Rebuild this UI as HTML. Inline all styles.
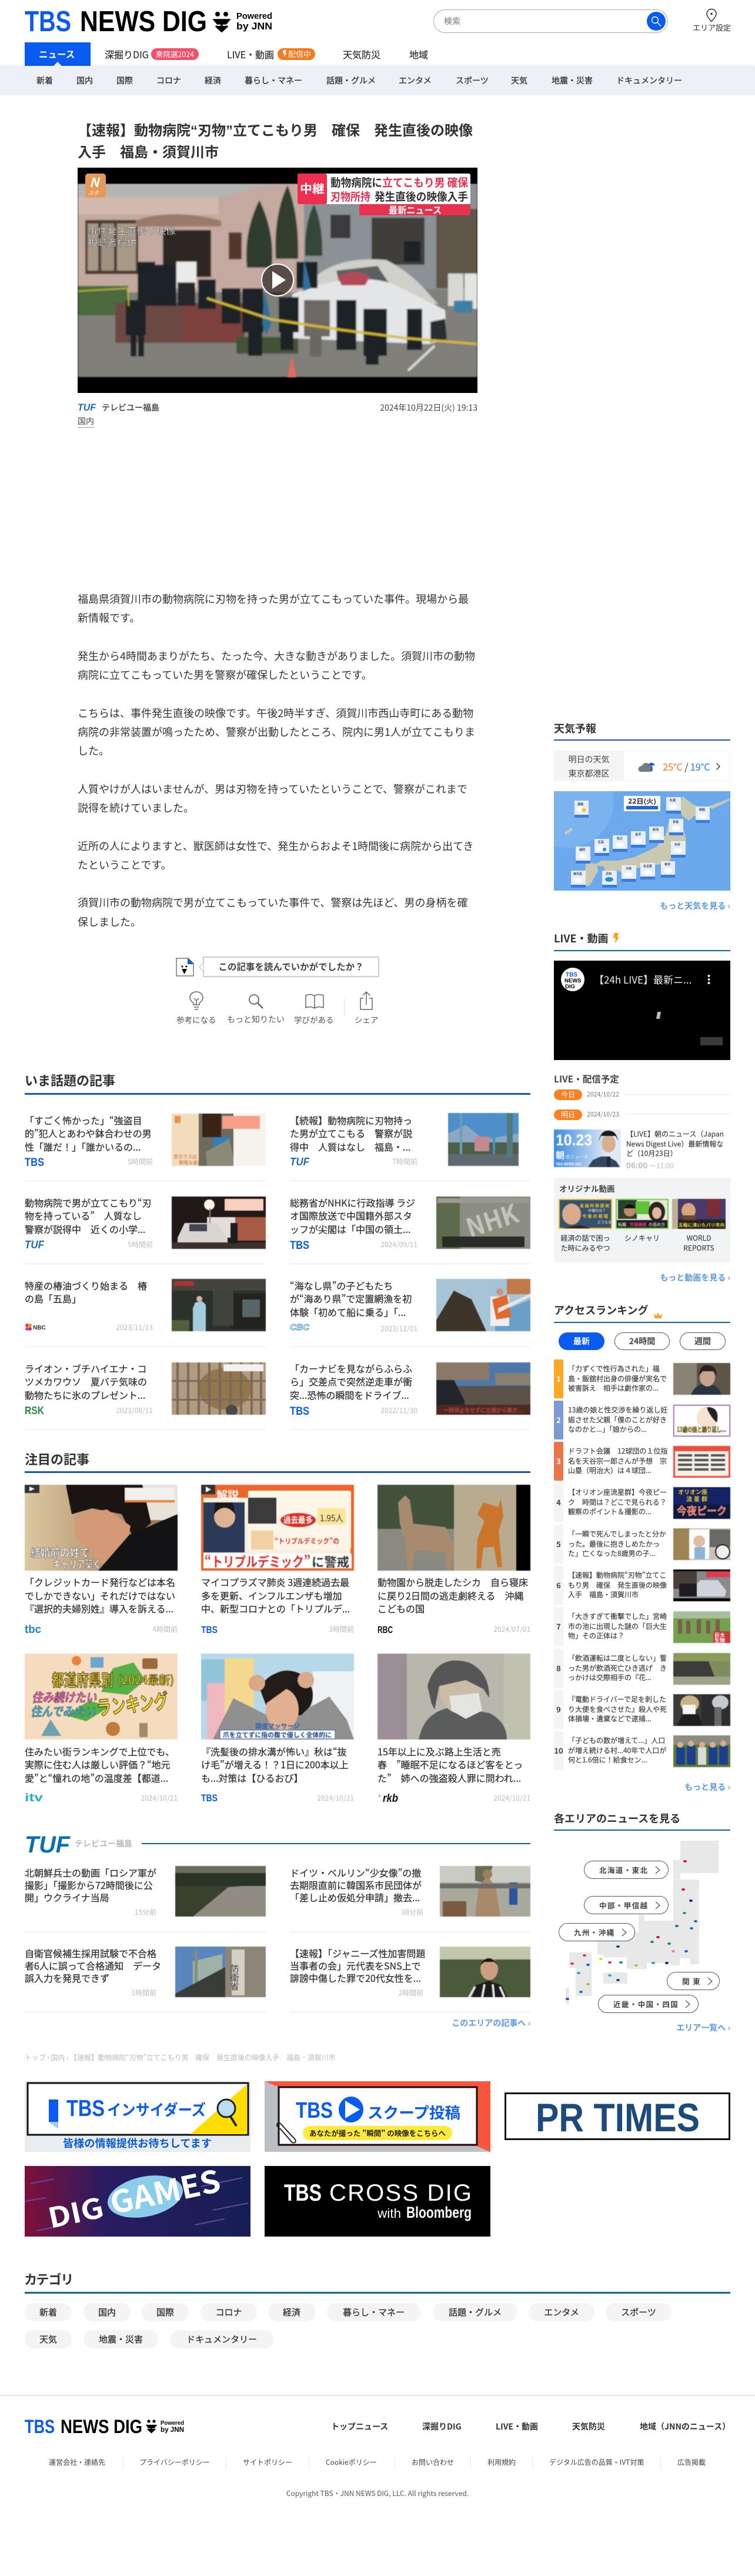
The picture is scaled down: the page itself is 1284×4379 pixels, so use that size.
<!DOCTYPE html>
<html lang="ja">
<head>
<meta charset="utf-8">
<title>TBS NEWS DIG</title>
<style>
html,body{margin:0;padding:0;background:#fff}
body{position:relative;width:1284px;height:4379px;overflow:hidden;font-family:"Noto Sans CJK JP","Liberation Sans",sans-serif;color:#333;font-size:14px}
.t{position:absolute;white-space:nowrap}
.a{position:absolute;display:block}
.b{font-weight:700}
.m{-webkit-text-stroke:.25px currentColor}
.q{font-family:"Liberation Sans",sans-serif}
.h{position:absolute;left:42px;font-size:22px;font-weight:700;line-height:30px;white-space:nowrap;color:#333}
.s{position:absolute;left:942px;font-size:18px;font-weight:700;line-height:26px;white-space:nowrap;color:#333}
.l{position:absolute;height:2px;background:#0b5bb5}
.sep{position:absolute;height:1px;background:#e6e6e6}
.ttl{position:absolute;font-size:16px;line-height:22.4px;white-space:nowrap;color:#333;-webkit-text-stroke:.25px #333}
.tm{position:absolute;font-size:12px;line-height:16px;color:#bbb;white-space:nowrap;text-align:right}
.more{position:absolute;font-size:14px;font-weight:700;color:#5e9ae2;white-space:nowrap;line-height:20px;text-align:right}
.rk{position:absolute;left:942px;width:16px;height:66px;border-radius:2px;background:#f4f4f4;color:#444;font-size:13px;font-weight:700;line-height:66px;text-align:center}
.rt{position:absolute;left:966px;font-size:12px;line-height:16.6px;white-space:nowrap;color:#444;-webkit-text-stroke:.2px #444}
.pill{position:absolute;background:#fff;border:1px solid #555;border-radius:16px;box-sizing:border-box;height:31px;line-height:29px;text-align:center;font-size:12.5px;font-weight:700;color:#444;letter-spacing:1.4px;white-space:nowrap}
.dot{position:absolute;width:6px;height:4px;border-radius:50%}
.chip{position:absolute;height:31px;line-height:31px;background:#f4f4f4;border-radius:16px;text-align:center;font-size:15px;color:#333;-webkit-text-stroke:.3px #333;white-space:nowrap}
.sn{position:absolute;top:127px;font-size:14px;line-height:20px;color:#333;-webkit-text-stroke:.3px #333;white-space:nowrap}
.f{position:absolute;top:4177px;font-size:12px;line-height:18px;color:#444;white-space:nowrap}
.fd{position:absolute;top:4175px;width:1px;height:22px;background:#e6e6e6}
.fn{position:absolute;top:4115px;font-size:14px;line-height:20px;font-weight:700;color:#333;white-space:nowrap}
svg text{font-family:"Noto Sans CJK JP","Liberation Sans",sans-serif}
svg text.lg{font-family:"Liberation Sans",sans-serif;font-weight:700}
svg text.th{font-family:"Liberation Sans",sans-serif;font-weight:400}
svg[width="160"],svg[width="260"],svg[width="154"],svg[width="97"],svg[width="120"],svg[width="91"],svg[width="90"],svg[width="114"]{filter:blur(.6px)}
</style>
</head>
<body>

<!-- HEADER -->
<svg class="a" style="left:42px;top:14px" width="430" height="46">
<text class="lg" x="0" y="39" font-size="49" fill="#0a5bf0" textLength="79" lengthAdjust="spacingAndGlyphs">TBS</text>
<text class="lg" x="94" y="39" font-size="49" fill="#000" textLength="216" lengthAdjust="spacingAndGlyphs">NEWS DIG</text>
<circle cx="328" cy="10" r="4" fill="#000"/><circle cx="342" cy="10" r="4" fill="#000"/>
<path d="M323 20h24l-5 6h-14zM335 20v19M325 30l10 9 10-9" fill="#000" stroke="#000" stroke-width="3.5"/>
<text class="lg" x="360" y="18" font-size="15" fill="#000" textLength="61" lengthAdjust="spacingAndGlyphs">Powered</text>
<text class="lg" x="360" y="36" font-size="17" fill="#000" textLength="61" lengthAdjust="spacingAndGlyphs">by JNN</text>
</svg>
<div class="a" style="left:737px;top:16px;width:399px;height:40px;box-sizing:border-box;border:1px solid #aaa;border-radius:20px"></div>
<div class="t" style="left:755px;top:26px;font-size:14px;line-height:20px;color:#777">検索</div>
<svg class="a" style="left:1100px;top:20px" width="32" height="32"><circle cx="16" cy="16" r="16" fill="#0a5bf0"/><circle cx="14" cy="14" r="5.5" fill="none" stroke="#fff" stroke-width="1.4"/><path d="M18 18l6 6.5" stroke="#fff" stroke-width="1.4"/></svg>
<svg class="a" style="left:1200px;top:14px" width="20" height="24"><path d="M10 1.5c4.6 0 8 3.4 8 7.8 0 4.4-4 8.4-8 13.2-4-4.8-8-8.8-8-13.2 0-4.4 3.4-7.8 8-7.8z" fill="none" stroke="#333" stroke-width="1.5"/><circle cx="10" cy="9.5" r="1.8" fill="#333"/></svg>
<div class="t" style="left:1178px;top:38px;font-size:13px;line-height:18px;color:#333">エリア設定</div>

<!-- NAV -->
<div class="a" style="left:42px;top:72px;width:112px;height:40px;background:#0a5bf0"></div>
<div class="t b" style="left:66px;top:81px;font-size:15.5px;line-height:22px;color:#fff">ニュース</div>
<svg class="a" style="left:90px;top:105px" width="16" height="7"><path d="M8 0l7 7H1z" fill="#eef1f7"/></svg>
<div class="t m" style="left:178px;top:80px;font-size:16px;line-height:24px;color:#333">深掘りDIG</div>
<div class="t" style="left:257px;top:82px;width:81px;height:20px;line-height:20px;border-radius:10px;background:#f0506a;color:#fff;font-size:12.5px;text-align:center">衆院選2024</div>
<div class="t m" style="left:386px;top:80px;font-size:16px;line-height:24px;color:#333">LIVE・動画</div>
<div class="t" style="left:472px;top:82px;width:64px;height:20px;line-height:20px;border-radius:10px;background:#f47a1f;color:#fff;font-size:13px;text-align:right;padding-right:7px;box-sizing:border-box">配信中</div>
<svg class="a" style="left:481px;top:85px" width="7" height="12"><path d="M1 0h5L4 5h2.500L2 12l1-6H0z" fill="#fff"/></svg>
<div class="t m" style="left:583px;top:80px;font-size:16px;line-height:24px;color:#333">天気防災</div>
<div class="t m" style="left:696px;top:80px;font-size:16px;line-height:24px;color:#333">地域</div>

<!-- SUB NAV -->
<div class="a" style="left:0;top:112px;width:1284px;height:50px;background:#edf0f7;box-shadow:0 -3px 5px rgba(0,0,0,.04)"></div>
<div class="sn" style="left:62px">新着</div><div class="sn" style="left:130px">国内</div><div class="sn" style="left:198px">国際</div><div class="sn" style="left:266px">コロナ</div><div class="sn" style="left:348px">経済</div><div class="sn" style="left:416px">暮らし・マネー</div><div class="sn" style="left:555px">話題・グルメ</div><div class="sn" style="left:678px">エンタメ</div><div class="sn" style="left:775px">スポーツ</div><div class="sn" style="left:869px">天気</div><div class="sn" style="left:938px">地震・災害</div><div class="sn" style="left:1048px">ドキュメンタリー</div>

<!-- TITLE -->
<div class="t b" style="left:132px;top:203px;font-size:24px;line-height:34px;color:#333">【速報】動物病院<span class="q">“</span>刃物<span class="q">”</span>立てこもり男　確保　発生直後の映像<br>入手　福島・須賀川市</div>

<!-- MAIN VIDEO -->
<svg class="a" style="left:132px;top:285px" width="680" height="383" viewBox="0 0 680 383">
<defs><filter id="bl" x="0" y="0" width="1" height="1"><feGaussianBlur stdDeviation="1.2"/></filter></defs>
<rect width="680" height="383" fill="#000"/>
<g filter="url(#bl)">
<rect y="27" width="680" height="329" fill="#807f7a"/>
<rect y="27" width="390" height="185" fill="#c3a99f"/>
<path d="M0 27h330l-90 24H0z" fill="#b3b6b2"/>
<rect x="0" y="50" width="240" height="30" fill="#d2b8ae"/>
<rect x="385" y="27" width="295" height="180" fill="#8b9195"/>
<rect x="610" y="70" width="70" height="135" fill="#5f5448"/>
<rect x="500" y="85" width="90" height="80" fill="#403c3a"/>
<rect x="430" y="80" width="34" height="40" fill="#3a3b3d"/>
<rect x="13" y="89" width="90" height="92" fill="#4b3a30"/><rect x="17" y="95" width="18" height="80" fill="#a99a88"/><rect x="40" y="95" width="22" height="80" fill="#9f917f"/><rect x="67" y="95" width="32" height="80" fill="#a99a88"/>
<path d="M99 90q60-22 145 0v10H99z" fill="#9a7a6a"/>
<rect x="145" y="106" width="82" height="80" fill="#2e2521"/>
<rect x="257" y="110" width="22" height="46" fill="#51382c"/>
<path d="M288 170q-6-60 21-115 27 55 21 115z" fill="#2f3d2f"/>
<path d="M337 155q-4-75 20-125 20 50 18 125z" fill="#303d2f"/>
<path d="M387 150q-2-55 15-88 15 33 14 88z" fill="#364637"/>
<rect x="0" y="201" width="86" height="50" fill="#4c6a3d"/>
<rect x="64" y="230" width="220" height="68" fill="#6b4843"/>
<rect x="180" y="235" width="100" height="60" fill="#7c403d"/>
<rect x="270" y="288" width="105" height="28" fill="#425237"/>
<path d="M405 185q40-35 120-28 40 20 70 55l18 20-200 10z" fill="#cfd0cc"/>
<path d="M440 175l70-8 20 30h-85z" fill="#5c5f61"/>
<path d="M365 215q100-40 170-18l90 45 2 50-30 8-230-10z" fill="#e4e5e6"/>
<path d="M600 262l25-5 3 35-28 5z" fill="#2a2d30"/>
<path d="M442 185q30-15 55 0l-8 15h-40z" fill="#b24a58"/>
<g fill="#1f2025"><rect x="102" y="160" width="30" height="75"/><rect x="132" y="165" width="36" height="70"/><rect x="205" y="190" width="30" height="50"/><rect x="245" y="205" width="32" height="60"/><rect x="280" y="205" width="36" height="75"/><rect x="342" y="220" width="34" height="60"/><rect x="372" y="160" width="36" height="45"/><rect x="82" y="225" width="34" height="60"/><rect x="90" y="285" width="10" height="36"/><rect x="103" y="285" width="10" height="36"/><rect x="440" y="225" width="34" height="85"/><rect x="486" y="240" width="40" height="80"/><rect x="560" y="240" width="26" height="70"/><rect x="555" y="125" width="28" height="35"/><rect x="290" y="280" width="24" height="40"/><rect x="345" y="280" width="22" height="30"/><rect x="490" y="315" width="22" height="20"/></g>
<rect x="168" y="160" width="34" height="45" fill="#eaeaea"/><rect x="170" y="195" width="30" height="40" fill="#26262c"/>
<rect x="385" y="225" width="44" height="62" fill="#6e6862"/><rect x="395" y="285" width="20" height="36" fill="#6b6660"/>
<path d="M318 205l12 60-10 20-6-20z M385 155l12 50-14 5z" fill="#2f6f9b"/>
<rect x="630" y="180" width="26" height="55" fill="#d9d9d4"/><rect x="658" y="180" width="22" height="60" fill="#e4e4e0"/>
<rect x="640" y="226" width="32" height="20" fill="#3c80a5"/>
<path d="M220 222L330 258 450 276 560 290 680 300" fill="none" stroke="#d6b92f" stroke-width="4"/>
<path d="M0 210l85-5 2 30" fill="none" stroke="#c9bc2a" stroke-width="2"/>
<path d="M357 357l7-35 8 35z" fill="#e8695c"/>
<path d="M562 345l45-42" stroke="#ddd" stroke-width="4"/>
</g>
<rect x="13" y="10" width="35" height="41" rx="5" fill="#e79a55"/>
<text x="20" y="33" font-size="22" font-weight="700" font-style="italic" fill="#fff">N</text><text x="18" y="46" font-size="9" font-style="italic" fill="#fff">スタ</text>
<rect x="374" y="10" width="294" height="52" rx="3" fill="#fff"/>
<rect x="374" y="10" width="50" height="52" rx="3" fill="#ee2f4f"/>
<text x="378" y="43" font-size="20" font-weight="700" fill="#fff" textLength="42" lengthAdjust="spacingAndGlyphs">中継</text>
<text x="430" y="32" font-size="19" font-weight="700" fill="#333" textLength="88" lengthAdjust="spacingAndGlyphs">動物病院に</text>
<text x="518" y="32" font-size="19" font-weight="700" fill="#e8304f" textLength="146" lengthAdjust="spacingAndGlyphs">立てこもり男 確保</text>
<text x="430" y="56" font-size="19" font-weight="700" fill="#e8304f" textLength="68" lengthAdjust="spacingAndGlyphs">刃物所持</text>
<text x="505" y="56" font-size="19" font-weight="700" fill="#333" textLength="159" lengthAdjust="spacingAndGlyphs">発生直後の映像入手</text>
<rect x="479" y="62" width="189" height="19" rx="2" fill="#e8304f"/>
<text x="529" y="78" font-size="16" font-weight="700" fill="#fff" textLength="90" lengthAdjust="spacingAndGlyphs">最新ニュース</text>
<text x="17" y="113" font-size="16" fill="#fff" stroke="#000" stroke-width=".3" textLength="150" lengthAdjust="spacingAndGlyphs">事件発生直後の映像</text>
<text x="17" y="133" font-size="16" fill="#fff" stroke="#000" stroke-width=".3" textLength="84" lengthAdjust="spacingAndGlyphs">視聴者提供</text>
<circle cx="340" cy="191" r="27" fill="rgba(0,0,0,.55)" stroke="#fff" stroke-width="2"/>
<path d="M331 176l23 15-23 15z" fill="#fff"/>
</svg>

<!-- SOURCE -->
<svg class="a" style="left:132px;top:684px" width="34" height="18"><text class="lg" x="0" y="14" font-size="17" font-style="italic" fill="#1a6db8" textLength="31" lengthAdjust="spacingAndGlyphs">TUF</text></svg>
<div class="t m" style="left:173px;top:683px;font-size:14px;line-height:20px">テレビユー福島</div>
<div class="t" style="right:472px;top:683px;font-size:14px;line-height:20px;color:#444">2024年10月22日(火) 19:13</div>
<div class="t" style="left:132px;top:706px;font-size:14px;line-height:20px;color:#444;border-bottom:1px solid #999">国内</div>

<!-- BODY -->
<div class="t" style="left:132px;top:1002px;font-size:18px;line-height:32.4px;color:#333">福島県須賀川市の動物病院に刃物を持った男が立てこもっていた事件。現場から最<br>新情報です。<br><div style="height:32px"></div>発生から4時間あまりがたち、たった今、大きな動きがありました。須賀川市の動物<br>病院に立てこもっていた男を警察が確保したということです。<br><div style="height:32px"></div>こちらは、事件発生直後の映像です。午後2時半すぎ、須賀川市西山寺町にある動物<br>病院の非常装置が鳴ったため、警察が出動したところ、院内に男1人が立てこもりま<br>した。<br><div style="height:32px"></div>人質やけが人はいませんが、男は刃物を持っていたということで、警察がこれまで<br>説得を続けていました。<br><div style="height:32px"></div>近所の人によりますと、獣医師は女性で、発生からおよそ1時間後に病院から出てき<br>たということです。<br><div style="height:32px"></div>須賀川市の動物病院で男が立てこもっていた事件で、警察は先ほど、男の身柄を確<br>保しました。</div>

<!-- FEEDBACK -->
<svg class="a" style="left:299px;top:1628px" width="32" height="32"><path d="M1 1h20l9 9v21H1z" fill="#fff" stroke="#333" stroke-width="1"/><path d="M20 1l10 10H20z" fill="#0a5bf0"/><circle cx="11" cy="15" r="1.5" fill="#000"/><circle cx="18" cy="15" r="1.5" fill="#000"/><path d="M10 19h9l-4.500 9z" fill="#000"/></svg>
<div class="a" style="left:345px;top:1626px;width:300px;height:35px;box-sizing:border-box;border:2px solid #ccc;text-align:center;font-weight:700;font-size:15.500px;line-height:31px;color:#444;background:#fff">この記事を読んでいかがでしたか？</div>
<svg class="a" style="left:338px;top:1636px" width="9" height="16"><path d="M8 1L1 8l7 7" fill="#fff" stroke="#ccc" stroke-width="1.500"/></svg>
<svg class="a" style="left:320px;top:1684px" width="28" height="34" fill="none" stroke="#666" stroke-width="1.500"><path d="M9 24v-3C6 19 3 16 3 12 3 6 8 2 14 2s11 4 11 10c0 4-3 7-6 9v3z"/><path d="M10 13l4 4 4-4M14 17v7M10 28h8M11 32h6"/></svg>
<svg class="a" style="left:421px;top:1688px" width="28" height="28" fill="none" stroke="#666" stroke-width="1.800"><circle cx="11" cy="11" r="8"/><path d="M17 17l9 9" stroke-width="2.500"/></svg>
<svg class="a" style="left:518px;top:1688px" width="34" height="28" fill="none" stroke="#666" stroke-width="1.500"><path d="M17 5C13 2 7 2 2 4v21c5-2 11-2 15 1 4-3 10-3 15-1V4c-5-2-11-2-15 1zM17 5v21"/></svg>
<svg class="a" style="left:610px;top:1684px" width="26" height="34" fill="none" stroke="#666" stroke-width="1.500"><path d="M8 13H3v19h20V13h-5M13 24V2M7 8l6-6 6 6"/></svg>
<div class="t" style="left:300px;top:1723px;font-size:13.500px;line-height:20px;color:#555">参考になる</div>
<div class="t" style="left:386px;top:1723px;font-size:14px;line-height:20px;color:#555">もっと知りたい</div>
<div class="t" style="left:500px;top:1723px;font-size:13.500px;line-height:20px;color:#555">学びがある</div>
<div class="a" style="left:585px;top:1698px;width:1px;height:29px;background:#ddd"></div>
<div class="t" style="left:603px;top:1723px;font-size:13.500px;line-height:20px;color:#555">シェア</div>

<!-- いま話題 -->
<div class="h" style="top:1821px">いま話題の記事</div>
<div class="l" style="left:42px;top:1858px;width:860px;height:3px;background:#1158c0"></div>

<div class="ttl" style="left:42px;top:1893px">「すごく怖かった」“強盗目<br>的”犯人とあわや鉢合わせの男<br>性「誰だ！」「誰かいるの...</div>
<svg class="a" style="left:42px;top:1966px" width="40" height="18"><text class="lg" x="0" y="16" font-size="19" fill="#0a5bd6" textLength="33" lengthAdjust="spacingAndGlyphs">TBS</text></svg>
<div class="tm" style="left:160px;width:100px;top:1967px">5時間前</div>
<svg class="a" style="left:292px;top:1893px" width="160" height="89"><rect width="160" height="89" fill="#f2dcbb"/><rect x="46" width="65" height="89" fill="#6e6a5e"/><rect x="52" y="0" width="32" height="40" fill="#3a2418"/><rect x="70" y="40" width="30" height="22" fill="#2f7fb8"/><path d="M58 65l40-22 10 46H60z" fill="#8a8a78"/><rect x="105" width="55" height="89" fill="#f7f4ee"/><rect x="86" y="4" width="64" height="22" fill="#f6a08a"/><rect x="5" y="4" width="10" height="12" fill="#e89050"/><text x="3" y="76" font-size="8" fill="#c4663c">窓ガラスは</text><text x="12" y="86" font-size="8" fill="#c4663c">無残な姿に</text></svg>
<div class="sep" style="left:42px;top:2007px;width:410px"></div>

<div class="ttl" style="left:493px;top:1893px">【続報】動物病院に刃物持っ<br>た男が立てこもる　警察が説<br>得中　人質はなし　福島・...</div>
<svg class="a" style="left:493px;top:1966px" width="36" height="18"><text class="lg" x="0" y="15" font-size="18" font-style="italic" fill="#1a6db8" textLength="33" lengthAdjust="spacingAndGlyphs">TUF</text></svg>
<div class="tm" style="left:610px;width:100px;top:1967px">7時間前</div>
<svg class="a" style="left:762px;top:1892px" width="120" height="90"><rect width="120" height="90" fill="#4f8fc9"/><path d="M0 35l30-15 30 25 60-10v30H0z" fill="#8aa8c4"/><rect y="50" width="120" height="25" fill="#4a6048"/><rect y="70" width="120" height="20" fill="#5f6a6e"/><rect x="20" width="4" height="70" fill="#6aa0b8"/><rect x="76" width="4" height="70" fill="#4a90c0"/><rect x="100" width="10" height="75" fill="#537a7a"/><rect x="45" y="40" width="25" height="25" fill="#c28a90"/></svg>
<div class="sep" style="left:493px;top:2007px;width:409px"></div>

<div class="ttl" style="left:42px;top:2033px">動物病院で男が立てこもり“刃<br>物を持っている”　人質なし<br>警察が説得中　近くの小学...</div>
<svg class="a" style="left:42px;top:2107px" width="36" height="18"><text class="lg" x="0" y="15" font-size="18" font-style="italic" fill="#1a6db8" textLength="33" lengthAdjust="spacingAndGlyphs">TUF</text></svg>
<div class="tm" style="left:160px;width:100px;top:2108px">5時間前</div>
<svg class="a" style="left:292px;top:2034px" width="160" height="89"><rect width="160" height="89" fill="#211818"/><rect x="60" y="35" width="72" height="35" fill="#e4ded8"/><rect x="108" y="35" width="52" height="40" fill="#a85a44"/><circle cx="64" cy="14" r="9" fill="#f8f8e8"/><rect x="64" y="20" width="2" height="50" fill="#888"/><path d="M10 70l12-25h55l18 25v14H10z" fill="#d9d6cf"/><rect x="30" y="47" width="30" height="12" fill="#445"/><rect y="78" width="160" height="11" fill="#3a302c"/><rect x="90" y="4" width="66" height="20" fill="#f8d0c0"/><rect x="100" y="45" width="12" height="35" fill="#1c1c22"/></svg>
<div class="sep" style="left:42px;top:2148px;width:410px"></div>

<div class="ttl" style="left:493px;top:2033px">総務省がNHKに行政指導 ラジ<br>オ国際放送で中国籍外部スタ<br>ッフが尖閣は「中国の領土...</div>
<svg class="a" style="left:493px;top:2107px" width="40" height="18"><text class="lg" x="0" y="16" font-size="19" fill="#0a5bd6" textLength="33" lengthAdjust="spacingAndGlyphs">TBS</text></svg>
<div class="tm" style="left:610px;width:100px;top:2108px">2024/09/11</div>
<svg class="a" style="left:742px;top:2034px" width="160" height="89"><rect width="160" height="89" fill="#8c8e83"/><rect width="40" height="89" fill="#5d6b4c"/><text x="52" y="62" font-size="44" font-weight="700" fill="#c4c4bc" transform="rotate(-18 80 50)" textLength="90" lengthAdjust="spacingAndGlyphs">NHK</text><rect x="10" y="68" width="140" height="18" fill="#2a2a28"/><rect x="2" y="3" width="155" height="8" fill="#9a9a90"/></svg>
<div class="sep" style="left:493px;top:2148px;width:409px"></div>

<div class="ttl" style="left:42px;top:2174px">特産の椿油づくり始まる　椿<br>の島「五島」</div>
<svg class="a" style="left:42px;top:2249px" width="36" height="14"><circle cx="4" cy="4" r="3" fill="#e8402c"/><circle cx="9" cy="4" r="3" fill="#f29020"/><circle cx="4" cy="10" r="3" fill="#e8408c"/><circle cx="9" cy="10" r="3" fill="#b03090"/><text class="lg" x="14" y="11" font-size="10" fill="#333">NBC</text></svg>
<div class="tm" style="left:160px;width:100px;top:2249px">2023/11/13</div>
<svg class="a" style="left:292px;top:2174px" width="160" height="89"><rect width="160" height="89" fill="#2a322a"/><rect x="0" y="0" width="160" height="20" fill="#44443c"/><rect x="100" y="25" width="60" height="60" fill="#22221e"/><path d="M40 40l12-2 6 6v45H36V50z" fill="#a4ccdc"/><circle cx="47" cy="34" r="5" fill="#d0b8a8"/><rect x="70" y="20" width="35" height="60" fill="#40423e"/><rect x="4" y="4" width="34" height="8" fill="#a33"/><rect y="70" width="30" height="19" fill="#50603c"/><rect x="120" y="35" width="30" height="30" fill="#566"/></svg>
<div class="sep" style="left:42px;top:2289px;width:410px"></div>

<div class="ttl" style="left:493px;top:2174px">“海なし県”の子どもたち<br>が“海あり県”で定置網漁を初<br>体験「初めて船に乗る」「...</div>
<svg class="a" style="left:493px;top:2248px" width="36" height="16"><text class="lg" x="0" y="13" font-size="15" font-style="italic" fill="#fff" stroke="#3d94c4" stroke-width=".9" textLength="33" lengthAdjust="spacingAndGlyphs">CBC</text></svg>
<div class="tm" style="left:610px;width:100px;top:2251px">2023/12/01</div>
<svg class="a" style="left:742px;top:2174px" width="160" height="89"><rect width="160" height="89" fill="#a7c4d6"/><path d="M0 89V70L30 20l30 15 25 54z" fill="#3d352a"/><path d="M100 60l60-25v54h-60z" fill="#6aa0c8"/><rect x="92" y="30" width="32" height="50" fill="#eee"/><path d="M95 35l25-8 8 38-26 4z" fill="#e2692e"/><circle cx="108" cy="22" r="6" fill="#c49880"/><rect x="120" y="0" width="40" height="26" fill="#c07a4c"/><path d="M105 50l55-25v5l-55 28z" fill="#e6e6e6"/></svg>
<div class="sep" style="left:493px;top:2289px;width:409px"></div>

<div class="ttl" style="left:42px;top:2315px">ライオン・ブチハイエナ・コ<br>ツメカワウソ　夏バテ気味の<br>動物たちに氷のプレゼント...</div>
<svg class="a" style="left:42px;top:2389px" width="36" height="18"><text class="lg" x="0" y="15" font-size="18" fill="#2a8a3e" textLength="33" lengthAdjust="spacingAndGlyphs">RSK</text></svg>
<div class="tm" style="left:160px;width:100px;top:2390px">2023/08/11</div>
<svg class="a" style="left:292px;top:2316px" width="160" height="89"><rect width="160" height="89" fill="#b09a80"/><ellipse cx="90" cy="45" rx="45" ry="35" fill="#94764c"/><path d="M10 0v89M28 0v89M46 0v89M64 0v89M82 0v89M100 0v89M118 0v89M136 0v89M152 0v89" stroke="#7c6858" stroke-width="4"/><rect y="30" width="160" height="3" fill="#7c6858"/><rect y="62" width="160" height="3" fill="#7c6858"/><rect x="88" y="3" width="68" height="12" fill="#f2f2f2"/><circle cx="102" cy="82" r="10" fill="#4a4a4a"/></svg>
<div class="sep" style="left:42px;top:2430px;width:410px"></div>

<div class="ttl" style="left:493px;top:2315px">「カーナビを見ながらふらふ<br>ら」交差点で突然逆走車が衝<br>突...恐怖の瞬間をドライブ...</div>
<svg class="a" style="left:493px;top:2389px" width="40" height="18"><text class="lg" x="0" y="16" font-size="19" fill="#0a5bd6" textLength="33" lengthAdjust="spacingAndGlyphs">TBS</text></svg>
<div class="tm" style="left:610px;width:100px;top:2390px">2022/11/30</div>
<svg class="a" style="left:742px;top:2316px" width="160" height="89"><rect width="160" height="89" fill="#4e78a8"/><rect x="0" y="0" width="90" height="30" fill="#8a7868"/><rect x="100" y="18" width="60" height="20" fill="#8a8070"/><path d="M0 89V40h160v49z" fill="#5c5348"/><path d="M0 30h30l18 35v24H0z" fill="#22262c"/><rect y="72" width="160" height="17" fill="#4c2a22"/><text x="12" y="85" font-size="10" font-weight="700" fill="#b8433c" textLength="135" lengthAdjust="spacingAndGlyphs">一時停止をせずに左側から車が...</text></svg>
<div class="sep" style="left:493px;top:2430px;width:409px"></div>

<!-- 注目 -->
<div class="h" style="top:2465px">注目の記事</div>
<div class="l" style="left:42px;top:2501px;width:860px;height:3px;background:#1158c0"></div>

<svg class="a" style="left:42px;top:2524px" width="260" height="146"><defs><linearGradient id="g1" x1="0" x2="1"><stop offset="0" stop-color="#ddc8a2"/><stop offset="1" stop-color="#96684a"/></linearGradient></defs><rect width="260" height="146" fill="url(#g1)"/><rect x="170" width="90" height="60" fill="#e8e2da"/><path d="M70 0h130l15 65-30 25-20-40-50-10-35 10z" fill="#1a1512"/><path d="M85 50l55-8 40 28-10 48-40 17-45-50z" fill="#d49a78"/><path d="M178 85l82-35v96H125z" fill="#131316"/><text x="10" y="122" font-size="19" font-weight="700" fill="#fff" stroke="#333" stroke-width=".5" textLength="100" lengthAdjust="spacingAndGlyphs">結婚前の姓で</text><text x="48" y="142" font-size="19" font-weight="700" fill="#fff" stroke="#333" stroke-width=".5" textLength="82" lengthAdjust="spacingAndGlyphs">キャリア築く</text><rect width="25" height="14" fill="#333"/><path d="M8 3l9 4-9 4z" fill="#fff"/><rect x="170" y="5" width="85" height="24" fill="#f2f0ee"/><rect x="170" y="26" width="85" height="4" fill="#e88440"/></svg>
<svg class="a" style="left:342px;top:2524px" width="260" height="146"><rect width="260" height="146" fill="#e9672d"/><rect x="4" y="22" width="250" height="95" fill="#f7efe2"/><rect x="80" y="10" width="175" height="100" rx="3" fill="#fdf6e8"/><rect x="4" y="30" width="70" height="85" fill="#2a3a58"/><circle cx="40" cy="55" r="18" fill="#ddb494"/><path d="M22 50q18-22 36 0l-4-20H24z" fill="#1a1a1a"/><rect x="80" y="22" width="48" height="44" fill="#3b3b3b"/><ellipse cx="165" cy="60" rx="30" ry="12" fill="#d8322a"/><text x="140" y="65" font-size="14" font-weight="700" fill="#fff" textLength="50" lengthAdjust="spacingAndGlyphs">過去最多</text><rect x="198" y="40" width="48" height="28" fill="#fbe79a"/><text x="202" y="62" font-size="15" fill="#333" textLength="40" lengthAdjust="spacingAndGlyphs">1.95人</text><rect x="85" y="78" width="38" height="32" fill="#f2d2a4"/><text x="125" y="100" font-size="12" font-weight="700" fill="#d8322a" textLength="110" lengthAdjust="spacingAndGlyphs">“トリプルデミック”の</text><rect x="4" y="117" width="252" height="25" fill="#fff"/><text x="6" y="139" font-size="23" font-weight="700" fill="#d8322a" textLength="180" lengthAdjust="spacingAndGlyphs">“トリプルデミック”</text><text x="188" y="139" font-size="21" font-weight="700" fill="#333" textLength="64" lengthAdjust="spacingAndGlyphs">に警戒</text><rect width="24" height="16" fill="#333"/><path d="M8 3l9 5-9 5z" fill="#fff"/><text x="26" y="24" font-size="18" font-weight="700" fill="#fff" textLength="38" lengthAdjust="spacingAndGlyphs">解説</text></svg>
<svg class="a" style="left:642px;top:2524px" width="260" height="146"><rect width="260" height="146" fill="#42523a"/><rect y="75" width="130" height="71" fill="#8a8a80"/><rect x="130" width="110" height="146" fill="#b8ab90"/><rect x="236" width="24" height="146" fill="#000"/><path d="M35 30l12-12 8 8 6 40 55 6 14 32-6 42h-6l-3-30-50-6-8 36h-7l-2-45-10-35z" fill="#a88a6e"/><path d="M170 50l10-20 25 8 5-14 4 30-8 24 6 62h-8l-6-35-18 2-4 35h-8l2-50 12-30z" fill="#c9752c"/></svg>

<div class="ttl" style="left:42px;top:2678px;line-height:22.700px">「クレジットカード発行などは本名<br>でしかできない」それだけではない<br>『選択的夫婦別姓』導入を訴える...</div>
<div class="ttl" style="left:342px;top:2678px;line-height:22.700px">マイコプラズマ肺炎 3週連続過去最<br>多を更新、インフルエンザも増加<br>中、新型コロナとの「トリプルデ...</div>
<div class="ttl" style="left:642px;top:2678px;line-height:22.700px">動物園から脱走したシカ　自ら寝床<br>に戻り2日間の逃走劇終える　沖縄<br>こどもの国</div>
<svg class="a" style="left:42px;top:2761px" width="32" height="18"><text class="lg" x="0" y="15" font-size="19" fill="#1f82c4" textLength="28" lengthAdjust="spacingAndGlyphs">tbc</text></svg>
<svg class="a" style="left:342px;top:2761px" width="32" height="18"><text class="lg" x="0" y="15" font-size="17" fill="#0a5bd6" textLength="28" lengthAdjust="spacingAndGlyphs">TBS</text></svg>
<svg class="a" style="left:642px;top:2761px" width="32" height="18"><text class="lg" x="0" y="15" font-size="17" fill="#111" textLength="26" lengthAdjust="spacingAndGlyphs">RBC</text></svg>
<div class="tm" style="left:202px;width:100px;top:2762px">4時間前</div><div class="tm" style="left:502px;width:100px;top:2762px">3時間前</div><div class="tm" style="left:802px;width:100px;top:2762px">2024/07/01</div>

<svg class="a" style="left:42px;top:2811px" width="260" height="146"><rect width="260" height="146" fill="#f6dcbf"/><path d="M150 25l35-10 20 30-30 25-45-5z" fill="#56b046"/><path d="M70 105l40-25 35 10-40 25z" fill="#56b046"/><text x="46" y="55" font-size="28" font-weight="700" fill="#f4d21e" stroke="#222" stroke-width="1" textLength="105" lengthAdjust="spacingAndGlyphs">都道府県別</text><text x="158" y="52" font-size="20" font-weight="700" fill="#f4d21e" stroke="#222" stroke-width=".7" textLength="96" lengthAdjust="spacingAndGlyphs">(2024最新)</text><text x="12" y="82" font-size="21" font-weight="700" font-style="italic" fill="#e85cb4" stroke="#222" stroke-width=".5" textLength="110" lengthAdjust="spacingAndGlyphs">住み続けたい</text><text x="10" y="106" font-size="21" font-weight="700" font-style="italic" fill="#49b8e4" stroke="#222" stroke-width=".5" textLength="110" lengthAdjust="spacingAndGlyphs">住んでみたい</text><text x="124" y="105" font-size="34" font-weight="700" fill="#ffe21c" stroke="#111" stroke-width="1" transform="rotate(-6 124 105)" textLength="122" lengthAdjust="spacingAndGlyphs">ランキング</text><circle cx="88" cy="12" r="8" fill="#e8843a"/><rect x="112" y="6" width="22" height="18" fill="#6aa8d0"/><rect x="200" y="8" width="26" height="18" rx="3" fill="#9a6a3c"/><circle cx="150" cy="128" r="12" fill="#c07a3a"/><path d="M28 140l16-28 18 28z" fill="#6ea0b0"/><rect x="195" y="118" width="14" height="24" fill="#a08a70"/></svg>
<svg class="a" style="left:342px;top:2811px" width="260" height="146"><rect width="260" height="146" fill="#b6d8e8"/><rect y="10" width="40" height="70" fill="#90c4d8"/><rect x="10" y="50" width="60" height="96" fill="#f0b8c0"/><rect x="40" y="8" width="50" height="110" fill="#f4d890"/><rect x="190" y="30" width="70" height="116" fill="#eef2f4"/><path d="M20 146l35-70 40 20 40 20 38-18 45-25 30 40 12 33z" fill="#909090"/><path d="M100 60q30-45 70-25 30 25 15 55l-15 15-55-5z" fill="#1f1a18"/><ellipse cx="138" cy="95" rx="28" ry="36" fill="#e0b090"/><path d="M105 50q25-30 60-10l-20 20-35 25z" fill="#241c18"/><circle cx="95" cy="50" r="14" fill="#d8a888"/><circle cx="178" cy="45" r="14" fill="#d8a888"/><rect x="32" y="130" width="196" height="15" fill="#fff" stroke="#2c60b0"/><text x="37" y="142" font-size="11" font-weight="700" fill="#1c3c80" textLength="185" lengthAdjust="spacingAndGlyphs">爪を立てずに指の腹で優しく全体的に</text><text x="92" y="127" font-size="11" font-weight="700" fill="#2c60b0" textLength="76" lengthAdjust="spacingAndGlyphs">頭皮マッサージ</text></svg>
<svg class="a" style="left:642px;top:2811px" width="260" height="146"><rect width="260" height="146" fill="#b9b7ab"/><rect width="50" height="146" fill="#9b8e96"/><rect x="215" width="45" height="146" fill="#c2c2b0"/><path d="M70 146q10-50 60-55l60 10q30 15 30 45z" fill="#5b5c5c"/><ellipse cx="140" cy="60" rx="34" ry="42" fill="#c9bda8"/><path d="M85 55q15-55 70-40 35 15 35 60l-10-15-30-15-45 10-8 40-5-10z" fill="#555"/><path d="M122 72l50-5 6 30-28 14-24-14z" fill="#e4e4e0"/></svg>

<div class="ttl" style="left:42px;top:2966px;line-height:22.400px">住みたい街ランキングで上位でも、<br>実際に住む人は厳しい評価？“地元<br>愛”と“憧れの地”の温度差【都道...</div>
<div class="ttl" style="left:342px;top:2966px;line-height:22.400px">『洗髪後の排水溝が怖い』秋は“抜<br>け毛”が増える！？1日に200本以上<br>も...対策は【ひるおび】</div>
<div class="ttl" style="left:642px;top:2966px;line-height:22.400px">15年以上に及ぶ路上生活と売<br>春　”睡眠不足になるほど客をとっ<br>た”　姉への強盗殺人罪に問われ...</div>
<svg class="a" style="left:42px;top:3047px" width="34" height="18"><text class="lg" x="0" y="15" font-size="19" fill="#25b0c8" textLength="31" lengthAdjust="spacingAndGlyphs">itv</text></svg>
<svg class="a" style="left:342px;top:3047px" width="32" height="18"><text class="lg" x="0" y="15" font-size="17" fill="#0a5bd6" textLength="28" lengthAdjust="spacingAndGlyphs">TBS</text></svg>
<svg class="a" style="left:642px;top:3047px" width="38" height="20"><text x="0" y="10" font-size="12" fill="#e8709c">+</text><text class="lg" x="9" y="16" font-size="19" font-style="italic" fill="#111" textLength="26" lengthAdjust="spacingAndGlyphs">rkb</text></svg>
<div class="tm" style="left:202px;width:100px;top:3049px">2024/10/21</div><div class="tm" style="left:502px;width:100px;top:3049px">2024/10/21</div><div class="tm" style="left:802px;width:100px;top:3049px">2024/10/21</div>

<!-- TUF SECTION -->
<svg class="a" style="left:42px;top:3118px" width="80" height="34"><text class="lg" x="0" y="31" font-size="40" font-style="italic" fill="#0b6fb4" textLength="77" lengthAdjust="spacingAndGlyphs">TUF</text></svg>
<div class="t" style="left:127px;top:3124px;font-size:14px;line-height:20px;color:#999">テレビユー福島</div>
<div class="l" style="left:241px;top:3133px;width:661px;background:#0a6aa8"></div>

<div class="ttl" style="left:42px;top:3173px;line-height:20.800px">北朝鮮兵士の動画「ロシア軍が<br>撮影」「撮影から72時間後に公<br>開」ウクライナ当局</div>
<svg class="a" style="left:298px;top:3172px" width="154" height="86"><rect width="154" height="86" fill="#39402e"/><path d="M30 86l60-50 64-5v55z" fill="#908c82"/><rect y="0" width="154" height="12" fill="#6a6c5e"/><rect x="0" y="12" width="154" height="22" fill="#2a3424"/></svg>
<div class="tm" style="left:166px;width:100px;top:3243px">15分前</div>
<div class="sep" style="left:42px;top:3284px;width:410px"></div>

<div class="ttl" style="left:493px;top:3173px;line-height:20.800px">ドイツ・ベルリン“少女像”の撤<br>去期限直前に韓国系市民団体が<br>「差し止め仮処分申請」撤去...</div>
<svg class="a" style="left:748px;top:3172px" width="154" height="86"><rect width="154" height="86" fill="#a9a89c"/><rect width="154" height="28" fill="#c8ccc4"/><path d="M60 0l30 0-10 30-20-5z" fill="#6a6c52"/><rect x="5" y="60" width="40" height="26" fill="#7a5a40"/><path d="M60 86l6-50 15-20 14 20 8 50z" fill="#a8896a"/><circle cx="81" cy="14" r="8" fill="#9a8060"/><rect x="118" y="28" width="14" height="38" fill="#2c54a0"/><rect y="30" width="154" height="8" fill="#6b6b68"/></svg>
<div class="tm" style="left:620px;width:100px;top:3243px">38分前</div>
<div class="sep" style="left:493px;top:3284px;width:409px"></div>

<div class="ttl" style="left:42px;top:3310px;line-height:20.900px">自衛官候補生採用試験で不合格<br>者6人に誤って合格通知　データ<br>誤入力を発見できず</div>
<svg class="a" style="left:298px;top:3309px" width="154" height="86"><rect width="154" height="86" fill="#5a86bc"/><path d="M30 25l50-12v55H30z" fill="#9eb2a8"/><rect x="33" y="6" width="5" height="55" fill="#8a8a7a"/><path d="M0 80l85-45v51H0z" fill="#3a3c38"/><rect x="85" width="69" height="86" fill="#8d8578"/><rect x="96" y="5" width="22" height="78" fill="#d4d0c6"/><text x="101" y="30" font-size="15" fill="#3a3a3a" writing-mode="tb">防衛省</text></svg>
<div class="tm" style="left:166px;width:100px;top:3380px">1時間前</div>
<div class="sep" style="left:42px;top:3420px;width:410px"></div>

<div class="ttl" style="left:493px;top:3310px;line-height:20.900px">【速報】「ジャニーズ性加害問題<br>当事者の会」元代表をSNS上で<br>誹謗中傷した罪で20代女性を...</div>
<svg class="a" style="left:748px;top:3309px" width="154" height="86"><rect width="154" height="86" fill="#4a5a3a"/><rect width="154" height="22" fill="#c2c6aa"/><path d="M55 86l6-20 22-8 22 8 10 20z" fill="#1c1c1e"/><ellipse cx="84" cy="38" rx="15" ry="19" fill="#caa080"/><path d="M68 32q14-24 32 0l-8-6H76z" fill="#1a1512"/><path d="M50 86l10-18M72 86l4-22M92 86l-2-22M110 86l-8-18" stroke="#ddd" stroke-width="4"/></svg>
<div class="tm" style="left:620px;width:100px;top:3380px">2時間前</div>
<div class="sep" style="left:493px;top:3420px;width:409px"></div>

<div class="more" style="right:382px;top:3429px">このエリアの記事へ ›</div>
<div class="t" style="left:42px;top:3489px;font-size:12px;line-height:18px;color:#bbb;letter-spacing:-.1px">トップ › 国内 › 【速報】動物病院“刃物”立てこもり男　確保　発生直後の映像入手　福島・須賀川市</div>

<!-- BANNERS -->
<svg class="a" style="left:42px;top:3538px" width="384" height="120"><rect width="384" height="120" fill="#e9edf0"/><rect x="5" y="3" width="375" height="88" fill="#fff" stroke="#111" stroke-width="3"/><path d="M378 5v85H282z" fill="#fd0"/><rect x="41" y="31" width="16" height="38" fill="#0a5bf0"/><path d="M41 69h16v12z" fill="#a9c6f4"/><text class="lg" x="71" y="59" font-size="39" fill="#0a5bf0" textLength="65" lengthAdjust="spacingAndGlyphs">TBS</text><text x="140" y="58" font-size="26" font-weight="700" fill="#0a5bf0" textLength="168" lengthAdjust="spacingAndGlyphs">インサイダーズ</text><circle cx="343" cy="46" r="15" fill="#b9dcf4" stroke="#222" stroke-width="3"/><path d="M350 60l10 16" stroke="#222" stroke-width="4"/><text x="65" y="112" font-size="18" font-weight="700" fill="#0a5bd6" textLength="253" lengthAdjust="spacingAndGlyphs">皆様の情報提供お待ちしてます</text></svg>
<svg class="a" style="left:450px;top:3538px" width="384" height="120"><rect width="384" height="120" fill="#f9553f"/><path d="M0 0l24 10v100h336l24 10H0z" fill="#bcc0c5"/><rect x="24" y="10" width="337" height="98" fill="#fff" stroke="#111" stroke-width="3"/><text class="lg" x="53" y="62" font-size="38" fill="#0a5bf0" textLength="63" lengthAdjust="spacingAndGlyphs">TBS</text><ellipse cx="147" cy="48" rx="21" ry="22" fill="#0a5bf0"/><path d="M137 33l25 15-25 15z" fill="#fff"/><text x="175" y="63" font-size="26" font-weight="700" fill="#0a5bf0" textLength="158" lengthAdjust="spacingAndGlyphs">スクープ投稿</text><rect x="65" y="76" width="254" height="24" rx="12" fill="#ffe93a"/><text x="76" y="93" font-size="12.500" font-weight="700" fill="#222" textLength="232" lengthAdjust="spacingAndGlyphs">あなたが撮った "瞬間" の映像をこちらへ</text><path d="M22 78l-1-5c1-3 5-3 7 0l24 26c3 4-2 8-6 4L26 80" fill="none" stroke="#222" stroke-width="2"/></svg>
<svg class="a" style="left:858px;top:3557px" width="384" height="81"><rect x="1.500" y="1.500" width="381" height="78" fill="#fff" stroke="#111" stroke-width="3"/><text class="lg" x="53" y="66" font-size="68" fill="#1c4a7a" textLength="279" lengthAdjust="spacingAndGlyphs">PR TIMES</text></svg>
<svg class="a" style="left:42px;top:3682px" width="384" height="120"><defs><linearGradient id="g4" x1="0" x2="1"><stop offset="0" stop-color="#7e1038"/><stop offset=".35" stop-color="#2a1c62"/><stop offset="1" stop-color="#161e54"/></linearGradient></defs><rect width="384" height="120" fill="url(#g4)"/><path d="M10 30l40-8M0 60l36-6M20 110l40-8M300 35l70-15M320 75l60-12M290 100l50-10" stroke="#5d4aa0" stroke-width="2"/><ellipse cx="205" cy="52" rx="65" ry="34" fill="#8accea" transform="rotate(-12 205 52)"/><text x="44" y="106" font-size="47" font-weight="700" fill="#fff" transform="rotate(-12 44 106)" textLength="95" lengthAdjust="spacingAndGlyphs">DIG</text><text x="150" y="82" font-size="52" font-weight="700" fill="#fff" transform="rotate(-12 150 82)" textLength="190" lengthAdjust="spacingAndGlyphs">GAMES</text></svg>
<svg class="a" style="left:450px;top:3682px" width="384" height="120"><rect width="384" height="120" fill="#000"/><text class="lg" x="33" y="59" font-size="40" fill="#fff" textLength="64" lengthAdjust="spacingAndGlyphs">TBS</text><text class="th" x="110" y="59" font-size="40" fill="#fff" textLength="242" lengthAdjust="spacing">CROSS DIG</text><text class="th" x="192" y="88" font-size="22" fill="#fff" textLength="40" lengthAdjust="spacingAndGlyphs">with</text><text class="lg" x="241" y="88" font-size="27" fill="#fff" textLength="111" lengthAdjust="spacingAndGlyphs">Bloomberg</text></svg>

<!-- CATEGORY -->
<div class="h" style="top:3859px;font-feature-settings:'palt'">カテゴリ</div>
<div class="l" style="left:42px;top:3896px;width:1200px;height:3px;background:#0a64a8"></div>
<div class="chip" style="left:42px;top:3915px;width:80px">新着</div><div class="chip" style="left:142px;top:3915px;width:80px">国内</div><div class="chip" style="left:241px;top:3915px;width:80px">国際</div><div class="chip" style="left:341px;top:3915px;width:96px">コロナ</div><div class="chip" style="left:456px;top:3915px;width:80px">経済</div><div class="chip" style="left:556px;top:3915px;width:159px">暮らし・マネー</div><div class="chip" style="left:736px;top:3915px;width:144px">話題・グルメ</div><div class="chip" style="left:899px;top:3915px;width:112px">エンタメ</div><div class="chip" style="left:1030px;top:3915px;width:112px">スポーツ</div>
<div class="chip" style="left:42px;top:3961px;width:80px">天気</div><div class="chip" style="left:142px;top:3961px;width:127px">地震・災害</div><div class="chip" style="left:289px;top:3961px;width:176px">ドキュメンタリー</div>

<!-- FOOTER -->
<div class="a" style="left:0;top:4071px;width:1284px;height:2px;background:#e6e6e6"></div>
<svg class="a" style="left:42px;top:4110px" width="280" height="30"><text class="lg" x="0" y="26" font-size="32" fill="#0a5bf0" textLength="51" lengthAdjust="spacingAndGlyphs">TBS</text><text class="lg" x="61" y="26" font-size="32" fill="#000" textLength="139" lengthAdjust="spacingAndGlyphs">NEWS DIG</text><circle cx="211" cy="6" r="2.600" fill="#000"/><circle cx="220" cy="6" r="2.600" fill="#000"/><path d="M208 13h15l-3 4h-9zM215.500 13v12M209 19l6.500 6 6.500-6" fill="#000" stroke="#000" stroke-width="2.200"/><text class="lg" x="231" y="12" font-size="10" fill="#000" textLength="40" lengthAdjust="spacingAndGlyphs">Powered</text><text class="lg" x="231" y="24" font-size="11.500" fill="#000" textLength="40" lengthAdjust="spacingAndGlyphs">by JNN</text></svg>
<div class="fn" style="left:563px">トップニュース</div><div class="fn" style="left:718px">深掘りDIG</div><div class="fn" style="left:843px">LIVE・動画</div><div class="fn" style="left:973px">天気防災</div><div class="fn" style="left:1088px">地域（JNNのニュース）</div>
<div class="f" style="left:83px">運営会社・連絡先</div><div class="fd" style="left:209px"></div><div class="f" style="left:237px">プライバシーポリシー</div><div class="fd" style="left:384px"></div><div class="f" style="left:413px">サイトポリシー</div><div class="fd" style="left:525px"></div><div class="f" style="left:554px">Cookieポリシー</div><div class="fd" style="left:671px"></div><div class="f" style="left:700px">お問い合わせ</div><div class="fd" style="left:800px"></div><div class="f" style="left:829px">利用規約</div><div class="fd" style="left:905px"></div><div class="f" style="left:934px">デジタル広告の品質・IVT対策</div><div class="fd" style="left:1123px"></div><div class="f" style="left:1152px">広告掲載</div>
<div class="t" style="left:0;width:1284px;top:4230px;font-size:12px;line-height:18px;color:#555;text-align:center">Copyright TBS・JNN NEWS DIG, LLC. All rights reserved.</div>

<!-- SIDEBAR: WEATHER -->
<div class="s" style="top:1225px">天気予報</div>
<div class="l" style="left:942px;top:1257px;width:300px;background:#1158c0"></div>
<div class="a" style="left:942px;top:1276px;width:300px;height:52px;box-sizing:border-box;border:1px solid #f2f2f2"></div>
<div class="a" style="left:942px;top:1276px;width:119px;height:52px;background:#f4f4f4"></div>
<div class="t" style="left:942px;width:119px;top:1279px;text-align:center;font-size:14px;line-height:24px;color:#444">明日の天気<br>東京都港区</div>
<svg class="a" style="left:1085px;top:1292px" width="30" height="22"><path d="M6 20c-8 0-7-10 1-10 1-6 11-7 13-1 7 0 7 11 1 11z" fill="#7a7a7a"/><path d="M17 9q6-9 12 0z" fill="#0a5bf0"/><path d="M23 8v8q0 2-3 1" fill="none" stroke="#0a5bf0" stroke-width="1.500"/></svg>
<div class="t" style="left:1127px;top:1291px;font-size:16.500px;line-height:24px;color:#f0792a;letter-spacing:-.3px">25°C <span style="color:#444">/</span> <span style="color:#2f80d8">19°C</span></div>
<svg class="a" style="left:1217px;top:1296px" width="9" height="14"><path d="M1.500 1.500L7 7l-5.500 5.500" fill="none" stroke="#444" stroke-width="1.500"/></svg>

<svg class="a" style="left:942px;top:1345px" width="300" height="169" viewBox="0 0 300 169"><rect width="300" height="169" fill="#6ba9ec"/><circle cx="22" cy="16" r="80" fill="#7ab3ee"/>
<path d="M218 8l18 14 27 12-8 10-17-2-8 8-12-8-4-14zM262 26l38-14-2 4-28 14z" fill="#c9c8b2"/>
<path d="M197 46l20 5 8 32-20 24-10 14-30 6-26 4-25 6-22-8-25-3 14-8 28 0 28-6 22-10 16-8 15-20z" fill="#c9c8b2"/>
<path d="M55 120l18 4 2 12-14 24-12 2 2-16z" fill="#c9c8b2"/><path d="M85 128h22l-4 9H88z" fill="#c9c8b2"/><path d="M30 62l-12 8 2 4 12-8z" fill="#c9c8b2"/>
<g fill="#e6eefa"><rect x="35" y="16" width="24" height="29"/><rect x="191" y="10" width="25" height="28"/><rect x="241" y="26" width="24" height="28"/><rect x="196" y="47" width="24" height="28"/><rect x="162" y="60" width="25" height="28"/><rect x="131" y="68" width="25" height="28"/><rect x="100" y="75" width="25" height="28"/><rect x="69" y="81" width="25" height="29"/><rect x="37" y="94" width="25" height="29"/><rect x="29" y="135" width="25" height="29"/><rect x="82" y="135" width="25" height="29"/><rect x="115" y="126" width="25" height="28"/><rect x="147" y="122" width="25" height="28"/><rect x="182" y="119" width="24" height="28"/><rect x="199" y="85" width="25" height="28"/></g>
<g fill="#3b7bdd"><rect x="35" y="40" width="24" height="5"/><rect x="191" y="33" width="25" height="5"/><rect x="241" y="49" width="24" height="5"/><rect x="196" y="70" width="24" height="5"/><rect x="162" y="83" width="25" height="5"/><rect x="131" y="91" width="25" height="5"/><rect x="100" y="98" width="25" height="5"/><rect x="69" y="105" width="25" height="5"/><rect x="37" y="118" width="25" height="5"/><rect x="29" y="159" width="25" height="5"/><rect x="82" y="159" width="25" height="5"/><rect x="115" y="149" width="25" height="5"/><rect x="147" y="145" width="25" height="5"/><rect x="182" y="142" width="24" height="5"/><rect x="199" y="108" width="25" height="5"/></g>
<g fill="#fff"><ellipse cx="45" cy="31" rx="7" ry="4"/><ellipse cx="203" cy="26" rx="7" ry="4"/><ellipse cx="253" cy="42" rx="7" ry="4"/><ellipse cx="208" cy="63" rx="7" ry="4"/><ellipse cx="174" cy="76" rx="7" ry="4"/><ellipse cx="143" cy="84" rx="7" ry="4"/><ellipse cx="112" cy="91" rx="7" ry="4"/><ellipse cx="78" cy="97" rx="7" ry="4"/><ellipse cx="49" cy="110" rx="7" ry="4"/><ellipse cx="41" cy="151" rx="7" ry="4"/><ellipse cx="127" cy="142" rx="7" ry="4"/><ellipse cx="160" cy="138" rx="7" ry="4"/><ellipse cx="194" cy="135" rx="7" ry="4"/><ellipse cx="211" cy="101" rx="7" ry="4"/></g>
<circle cx="51" cy="32" r="3.500" fill="#f2c231"/><ellipse cx="94" cy="150" rx="7" ry="4" fill="#2c88d8"/><circle cx="86" cy="99" r="3" fill="#2c88d8"/>
<g font-size="5" font-weight="700" fill="#445"><text x="40" y="24">那覇</text><text x="197" y="17">札幌</text><text x="247" y="33">釧路</text><text x="202" y="54">青森</text><text x="168" y="67">新潟</text><text x="138" y="75">金沢</text><text x="107" y="82">松江</text><text x="75" y="88">広島</text><text x="43" y="101">福岡</text><text x="33" y="142">鹿児島</text><text x="88" y="142">高知</text><text x="122" y="133">大阪</text><text x="152" y="129">名古屋</text><text x="188" y="126">東京</text><text x="205" y="92">仙台</text></g>
<rect x="119" y="8" width="62" height="26" fill="#fff"/><text x="126" y="21" font-size="11" font-weight="700" fill="#222" textLength="48" lengthAdjust="spacingAndGlyphs">22日(火)</text><rect x="123" y="25" width="54" height="6" fill="#2a66cf"/></svg>
<div class="more" style="right:42px;top:1530px">もっと天気を見る ›</div>

<!-- LIVE -->
<div class="s" style="top:1582px">LIVE・動画</div>
<svg class="a" style="left:1042px;top:1585px" width="12" height="20"><path d="M2 1h8L8 8h3L4 19l1-9H1z" fill="#f5a623"/></svg>
<div class="l" style="left:942px;top:1615px;width:300px;background:#0a64a8"></div>
<div class="a" style="left:942px;top:1633px;width:300px;height:169px;background:#000"></div>
<svg class="a" style="left:954px;top:1645px" width="40" height="40"><circle cx="20" cy="20" r="20" fill="#fff"/><text class="lg" x="8" y="15" font-size="10" fill="#0a5bf0">TBS</text><text class="lg" x="6" y="25" font-size="9.500" fill="#000">NEWS</text><text class="lg" x="7" y="35" font-size="9.500" fill="#000">DIG</text></svg>
<div class="t" style="left:1010px;top:1652px;font-size:17px;line-height:26px;color:#eee">【24h LIVE】最新ニ...</div>
<svg class="a" style="left:1203px;top:1656px" width="5" height="18"><circle cx="2.500" cy="3" r="2" fill="#eee"/><circle cx="2.500" cy="9" r="2" fill="#eee"/><circle cx="2.500" cy="15" r="2" fill="#eee"/></svg>
<div class="a" style="left:1117px;top:1720px;width:6px;height:12px;background:#bbb;transform:skewX(-10deg);border-radius:1px"></div>
<div class="a" style="left:1191px;top:1763px;width:38px;height:14px;background:#3a3a3a"></div>

<div class="t b" style="left:942px;top:1823px;font-size:15.500px;line-height:22px;color:#444">LIVE・配信予定</div>
<div class="t" style="left:942px;top:1852px;width:48px;height:18px;line-height:18px;border-radius:9px;background:#f98124;color:#fff;font-size:12px;text-align:center">今日</div>
<div class="t" style="left:998px;top:1853px;font-size:10.500px;line-height:16px;color:#777">2024/10/22</div>
<div class="a" style="left:1063px;top:1860px;width:179px;height:1px;background:#e8e8e8"></div>
<div class="t" style="left:942px;top:1886px;width:48px;height:18px;line-height:18px;border-radius:9px;background:#f98124;color:#fff;font-size:12px;text-align:center">明日</div>
<div class="t" style="left:998px;top:1887px;font-size:10.500px;line-height:16px;color:#777">2024/10/23</div>
<div class="a" style="left:1063px;top:1894px;width:179px;height:1px;background:#e8e8e8"></div>
<svg class="a" style="left:942px;top:1920px" width="114" height="64"><defs><linearGradient id="g5" x1="0" x2="1"><stop offset="0" stop-color="#3d8be0"/><stop offset=".8" stop-color="#dfeaf6"/></linearGradient></defs><rect width="114" height="64" fill="url(#g5)"/><text class="lg" x="3" y="27" font-size="27" fill="#fff" textLength="62" lengthAdjust="spacingAndGlyphs">10.23</text><text x="3" y="49" font-size="15" font-weight="700" fill="#fff">朝</text><text x="20" y="49" font-size="7.500" fill="#fff" textLength="38">のニュース</text><text class="lg" x="3" y="61" font-size="6" fill="#fff">TBS NEWS DIG</text><path d="M58 64l8-12 14-6h12l14 8 6 10z" fill="#32465e"/><ellipse cx="93" cy="24" rx="12" ry="15" fill="#d8b090"/><path d="M76 20q4-19 17-18 13 0 16 17l-4-8H80z" fill="#1c1a18"/><rect x="90" y="46" width="6" height="18" fill="#1e2a3e"/></svg>
<div class="t" style="left:1065px;top:1920px;font-size:12px;line-height:16.500px;color:#444;-webkit-text-stroke:.2px #444">【LIVE】朝のニュース（Japan<br>News Digest Live）最新情報な<br>ど（10月23日）</div>
<div class="t" style="left:1065px;top:1971px;font-size:12px;line-height:18px;color:#bbb"><b style="font-size:13.500px">06:00</b> ～11:00</div>

<div class="a" style="left:942px;top:2002px;width:300px;height:144px;background:#f1f3f5;border-radius:4px"></div>
<div class="t b" style="left:951px;top:2010px;font-size:13.500px;line-height:20px;color:#444">オリジナル動画</div>
<svg class="a" style="left:950px;top:2038px" width="91" height="51"><rect width="91" height="51" fill="#3a4654"/><rect x="1" y="1" width="89" height="49" fill="#36526a" stroke="#e8b93a" stroke-width="2"/><ellipse cx="22" cy="26" rx="16" ry="18" fill="#d8ab8c"/><path d="M6 50l30-5 18 5z" fill="#222"/><text x="36" y="14" font-size="7" font-weight="700" fill="#f2c42c" textLength="50">金融所得課税</text><text x="50" y="22" font-size="6" fill="#fff">の強化は？</text><text x="40" y="32" font-size="7.500" font-weight="700" fill="#f2c42c" textLength="44">今後の相場</text><text x="66" y="42" font-size="6" fill="#fff">どうなる</text></svg>
<svg class="a" style="left:1047px;top:2038px" width="90" height="51"><rect width="90" height="51" fill="#6ed13c"/><rect x="2" y="2" width="86" height="47" fill="#ece6d8"/><rect x="4" y="2" width="32" height="32" fill="#2c402e"/><circle cx="24" cy="20" r="10" fill="#bc8c6c"/><path d="M14 16q10-14 20 0z" fill="#111"/><rect x="34" y="4" width="24" height="22" fill="#5fc23a"/><ellipse cx="70" cy="22" rx="14" ry="17" fill="#2c2420"/><ellipse cx="70" cy="24" rx="8" ry="10" fill="#e0b8a0"/><rect x="2" y="36" width="86" height="13" fill="#222"/><text x="4" y="46" font-size="7" fill="#fff">転職</text><text x="24" y="46" font-size="7" font-weight="700" fill="#e8379c">市場価値</text><text x="56" y="46" font-size="7" fill="#fff">の高め方</text></svg>
<svg class="a" style="left:1143px;top:2038px" width="91" height="51"><rect width="91" height="51" fill="#3c2c4a"/><rect width="10" height="51" fill="#bfb096"/><rect x="10" y="0" width="81" height="34" fill="#4a3a6a"/><ellipse cx="28" cy="20" rx="12" ry="13" fill="#d8a67e"/><rect x="18" y="28" width="22" height="14" fill="#6a4a30"/><rect x="60" y="0" width="22" height="30" fill="#7c2c34"/><rect x="10" y="36" width="81" height="15" fill="#222"/><text x="11" y="47" font-size="7.500" font-weight="700" fill="#f4e430" textLength="78">五輪に沸いたパリ市内</text></svg>
<div class="t" style="left:950px;width:91px;top:2096px;text-align:center;font-size:12px;line-height:17px;color:#444;-webkit-text-stroke:.2px #444">経済の話で困っ<br>た時にみるやつ</div>
<div class="t" style="left:1047px;width:90px;top:2096px;text-align:center;font-size:12px;line-height:17px;color:#444;-webkit-text-stroke:.2px #444">シノキャリ</div>
<div class="t" style="left:1143px;width:91px;top:2096px;text-align:center;font-size:12px;line-height:17px;color:#444;-webkit-text-stroke:.2px #444">WORLD<br>REPORTS</div>
<div class="more" style="right:42px;top:2162px">もっと動画を見る ›</div>

<!-- RANKING -->
<div class="s" style="top:2214px">アクセスランキング</div>
<svg class="a" style="left:1111px;top:2231px" width="16" height="12"><path d="M1 2l4 4 3-6 3 6 4-4-1 8H2zM2 11h12" fill="#f5a623"/></svg>
<div class="l" style="left:942px;top:2247px;width:300px;background:#0a64a8"></div>
<div class="a" style="left:950px;top:2265px;width:78px;height:30px;border-radius:15px;background:#0a5bf0;color:#fff;font-weight:700;font-size:14px;line-height:30px;text-align:center">最新</div>
<div class="a" style="left:1045px;top:2265px;width:94px;height:30px;box-sizing:border-box;border:1px solid #555;border-radius:15px;color:#444;font-weight:700;font-size:14px;line-height:28px;text-align:center">24時間</div>
<div class="a" style="left:1156px;top:2265px;width:78px;height:30px;box-sizing:border-box;border:1px solid #555;border-radius:15px;color:#444;font-weight:700;font-size:14px;line-height:28px;text-align:center">週間</div>

<div class="rk" style="top:2311px;background:#fba924;color:#fff">1</div><div class="rk" style="top:2381px;background:#7f9ad0;color:#fff">2</div><div class="rk" style="top:2451px;background:#e8764a;color:#fff">3</div>
<div class="rk" style="top:2521px">4</div><div class="rk" style="top:2592px">5</div><div class="rk" style="top:2662px">6</div><div class="rk" style="top:2732px">7</div><div class="rk" style="top:2803px">8</div><div class="rk" style="top:2873px">9</div><div class="rk" style="top:2943px">10</div>

<div class="rt" style="top:2319px">「力ずくで性行為された」福<br>島・飯舘村出身の俳優が実名で<br>被害訴え　相手は劇作家の...</div>
<div class="rt" style="top:2389px">13歳の娘と性交渉を繰り返し妊<br>娠させた父親「僕のことが好き<br>なのかと...」「娘からの...</div>
<div class="rt" style="top:2459px">ドラフト会議　12球団の１位指<br>名を天谷宗一郎さんが予想　宗<br>山塁（明治大）は４球団...</div>
<div class="rt" style="top:2529px">【オリオン座流星群】今夜ピー<br>ク　時間は？どこで見られる？<br>観察のポイント＆撮影の...</div>
<div class="rt" style="top:2600px">「一瞬で死んでしまったと分か<br>った。最後に抱きしめたかっ<br>た」亡くなった8歳男の子...</div>
<div class="rt" style="top:2670px">【速報】動物病院“刃物”立てこ<br>もり男　確保　発生直後の映像<br>入手　福島・須賀川市</div>
<div class="rt" style="top:2740px">「大きすぎて衝撃でした」宮崎<br>市の池に出現した謎の「巨大生<br>物」その正体は？</div>
<div class="rt" style="top:2811px">「飲酒運転は二度としない」誓<br>った男が飲酒死亡ひき逃げ　き<br>っかけは交際相手の『花...</div>
<div class="rt" style="top:2881px">『電動ドライバーで足を刺した<br>り大便を食べさせた』殺人や死<br>体損壊・遺棄などで逮捕...</div>
<div class="rt" style="top:2951px">「子どもの数が増えて...」人口<br>が増え続ける村...40年で人口が<br>何と1.6倍に！給食セン...</div>

<svg class="a" style="left:1145px;top:2317px" width="97" height="54"><rect width="97" height="54" fill="#5e5448"/><rect width="40" height="54" fill="#8a8274"/><path d="M30 54q8-20 27-18 20 0 25 18z" fill="#2a3442"/><ellipse cx="58" cy="24" rx="13" ry="16" fill="#c9a48c"/><path d="M43 22q3-20 16-18 14 0 15 18l-6-8H50z" fill="#2a1e18"/></svg>
<svg class="a" style="left:1145px;top:2388px" width="97" height="54"><rect width="97" height="54" fill="#fff" stroke="#8c4ea8" stroke-width="3"/><ellipse cx="58" cy="22" rx="18" ry="19" fill="#f5e2d0"/><path d="M58 4q22 0 16 26-8-6-16-22z" fill="#222"/><text x="6" y="46" font-size="11" font-weight="700" fill="#f2d22c" stroke="#111" stroke-width=".5" textLength="84" lengthAdjust="spacingAndGlyphs">13歳の娘と繰り返し...</text></svg>
<svg class="a" style="left:1145px;top:2458px" width="97" height="54"><rect width="97" height="54" fill="#e8503c"/><rect x="3" y="9" width="91" height="42" fill="#f6efe6"/><g fill="#555"><rect x="8" y="14" width="24" height="4"/><rect x="36" y="14" width="24" height="4"/><rect x="64" y="14" width="24" height="4"/><rect x="8" y="22" width="24" height="4"/><rect x="36" y="22" width="24" height="4"/><rect x="64" y="22" width="24" height="4"/><rect x="8" y="30" width="24" height="4"/><rect x="36" y="30" width="24" height="4"/><rect x="64" y="30" width="24" height="4"/><rect x="8" y="38" width="24" height="4"/><rect x="36" y="38" width="24" height="4"/><rect x="64" y="38" width="24" height="4"/></g></svg>
<svg class="a" style="left:1145px;top:2528px" width="97" height="54"><rect width="97" height="54" fill="#152264"/><rect y="30" width="97" height="24" fill="#0b1a3c"/><text x="8" y="12" font-size="10" font-weight="700" fill="#f4d028" textLength="50">オリオン座</text><text x="22" y="24" font-size="10" font-weight="700" fill="#f4d028" textLength="36">流星群</text><text x="6" y="47" font-size="18" font-weight="700" fill="#f04aa0" stroke="#f4e430" stroke-width=".5" textLength="85" lengthAdjust="spacingAndGlyphs">今夜ピーク</text></svg>
<svg class="a" style="left:1145px;top:2598px" width="97" height="54"><rect width="97" height="54" fill="#c8c2b8"/><rect x="0" y="0" width="28" height="54" fill="#9c8454"/><rect x="27" y="2" width="34" height="50" fill="#fff"/><circle cx="44" cy="22" r="10" fill="#e0bca0"/><rect x="36" y="32" width="18" height="20" fill="#8ab4d4"/><rect x="62" y="2" width="35" height="30" fill="#6a6a64"/><circle cx="84" cy="40" r="12" fill="#f0f0f0" stroke="#222" stroke-width="2"/></svg>
<svg class="a" style="left:1145px;top:2668px" width="97" height="54"><rect width="97" height="54" fill="#000"/><rect y="3" width="97" height="46" fill="#8a8a8e"/><rect y="3" width="40" height="30" fill="#484038"/><path d="M30 34l16-16h30l14 18-2 10H32z" fill="#cfd4dc"/><rect x="10" y="24" width="30" height="22" fill="#1c1c22"/><rect x="56" y="3" width="40" height="10" fill="#e23a4c"/></svg>
<svg class="a" style="left:1145px;top:2739px" width="97" height="54"><rect width="97" height="54" fill="#74a24c"/><rect width="97" height="12" fill="#a9bea0"/><g fill="#7a5c50"><rect x="8" y="14" width="7" height="24"/><rect x="22" y="16" width="7" height="22"/><rect x="40" y="14" width="7" height="24"/><rect x="56" y="16" width="7" height="22"/><rect x="72" y="14" width="7" height="24"/></g><rect x="68" y="34" width="29" height="20" fill="#c93a3a"/><text x="70" y="44" font-size="9" font-weight="700" fill="#fff">巨大</text><text x="70" y="53" font-size="9" font-weight="700" fill="#fff">生物</text></svg>
<svg class="a" style="left:1145px;top:2810px" width="97" height="54"><rect width="97" height="54" fill="#7f8c5e"/><rect y="0" width="97" height="14" fill="#8c9a5c"/><path d="M0 14h60l10 26H0z" fill="#3e3c38"/><rect y="40" width="97" height="14" fill="#9fa489"/></svg>
<svg class="a" style="left:1145px;top:2880px" width="97" height="54"><rect width="97" height="54" fill="#3a3a38"/><ellipse cx="28" cy="16" rx="16" ry="14" fill="#c8b484"/><rect x="16" y="18" width="22" height="16" fill="#f4f4f4"/><path d="M6 54l10-20h26l10 20z" fill="#1e1e20"/><rect x="48" y="0" width="49" height="54" fill="#2e2e30"/><ellipse cx="80" cy="14" rx="14" ry="12" fill="#c4cad0"/><rect x="70" y="22" width="12" height="32" fill="#6a6664"/></svg>
<svg class="a" style="left:1145px;top:2950px" width="97" height="54"><rect width="97" height="54" fill="#5a7a3c"/><rect width="97" height="16" fill="#8c8c80"/><g fill="#1c3e8c"><rect x="5" y="20" width="15" height="30"/><rect x="23" y="18" width="15" height="32"/><rect x="60" y="20" width="15" height="30"/><rect x="78" y="18" width="15" height="32"/></g><rect x="42" y="20" width="14" height="30" fill="#dcdcdc"/><g fill="#d8b090"><circle cx="12" cy="16" r="5"/><circle cx="30" cy="14" r="5"/><circle cx="49" cy="16" r="5"/><circle cx="67" cy="16" r="5"/><circle cx="85" cy="14" r="5"/></g></svg>
<div class="more" style="right:42px;top:3028px">もっと見る ›</div>

<!-- AREA -->
<div class="s" style="top:3078px">各エリアのニュースを見る</div>
<div class="l" style="left:942px;top:3110px;width:300px;background:#0a64a8"></div>
<svg class="a" style="left:960px;top:3125px" width="270" height="290"><g fill="#e8e8e8"><path d="M197 4h65v55h-65v10h-12v-32h12z"/><path d="M214 70h15v144h-15v-10h-18v12h-16v-4h-40v10h-34v-20h-40v-4H56v-38h70v-30h10v10h66V81h-17v-11z"/><path d="M185 81h44v80h-44z"/><rect x="169" y="140" width="5" height="12"/><rect x="66" y="228" width="41" height="19"/><rect x="8" y="194" width="38" height="26"/><rect x="19" y="220" width="27" height="48"/><rect x="2" y="254" width="6" height="28"/></g></svg>
<div class="dot" style="left:1162px;top:3162px;background:#d0142c"></div><div class="dot" style="left:1159px;top:3210px;background:#d0142c"></div><div class="dot" style="left:1172px;top:3229px;background:#101e90"></div><div class="dot" style="left:1161px;top:3250px;background:#1aa070"></div><div class="dot" style="left:1148px;top:3272px;background:#1070b8"></div><div class="dot" style="left:1173px;top:3276px;background:#1070b8"></div><div class="dot" style="left:1180px;top:3264px;background:#1070b8"></div><div class="dot" style="left:1116px;top:3291px;background:#d0142c"></div><div class="dot" style="left:1106px;top:3299px;background:#109840"></div><div class="dot" style="left:1135px;top:3302px;background:#109840"></div><div class="dot" style="left:1142px;top:3315px;background:#f07ca0"></div><div class="dot" style="left:1164px;top:3315px;background:#0a5bf0"></div><div class="dot" style="left:1048px;top:3307px;background:#0a4a90"></div><div class="dot" style="left:1019px;top:3328px;background:#f4d010"></div><div class="dot" style="left:1034px;top:3334px;background:#e0288c"></div><div class="dot" style="left:1053px;top:3334px;background:#109840"></div><div class="dot" style="left:1079px;top:3339px;background:#a8cc18"></div><div class="dot" style="left:1108px;top:3335px;background:#18a0d8"></div><div class="dot" style="left:1131px;top:3335px;background:#101e90"></div><div class="dot" style="left:1034px;top:3356px;background:#20b4d8"></div><div class="dot" style="left:1048px;top:3364px;background:#0a4a90"></div><div class="dot" style="left:991px;top:3322px;background:#e0288c"></div><div class="dot" style="left:970px;top:3336px;background:#e0288c"></div><div class="dot" style="left:997px;top:3338px;background:#0a6ab0"></div><div class="dot" style="left:981px;top:3352px;background:#20a8b8"></div><div class="dot" style="left:997px;top:3371px;background:#a8cc18"></div><div class="dot" style="left:985px;top:3384px;background:#0a78c0"></div><div class="dot" style="left:962px;top:3396px;background:#3a3af0"></div>
<div class="pill" style="left:993px;top:3163px;width:144px;text-align:left;padding-left:25px">北海道・東北</div>
<div class="pill" style="left:993px;top:3223px;width:144px;text-align:left;padding-left:25px">中部・甲信越</div>
<div class="pill" style="left:950px;top:3269px;width:130px;text-align:left;padding-left:25px">九州・沖縄</div>
<div class="pill" style="left:1134px;top:3352px;width:90px;text-align:left;padding-left:25px">関 東</div>
<div class="pill" style="left:1017px;top:3391px;width:171px;text-align:left;padding-left:25px">近畿・中国・四国</div>
<svg class="a" style="left:1113px;top:3172px" width="12" height="14"><path d="M2 1l7 6-7 6" fill="none" stroke="#555" stroke-width="1.300"/></svg>
<svg class="a" style="left:1113px;top:3232px" width="12" height="14"><path d="M2 1l7 6-7 6" fill="none" stroke="#555" stroke-width="1.300"/></svg>
<svg class="a" style="left:1056px;top:3278px" width="12" height="14"><path d="M2 1l7 6-7 6" fill="none" stroke="#555" stroke-width="1.300"/></svg>
<svg class="a" style="left:1202px;top:3361px" width="12" height="14"><path d="M2 1l7 6-7 6" fill="none" stroke="#555" stroke-width="1.300"/></svg>
<svg class="a" style="left:1164px;top:3400px" width="12" height="14"><path d="M2 1l7 6-7 6" fill="none" stroke="#555" stroke-width="1.300"/></svg>
<div class="more" style="right:42px;top:3437px">エリア一覧へ ›</div>

</body>
</html>
